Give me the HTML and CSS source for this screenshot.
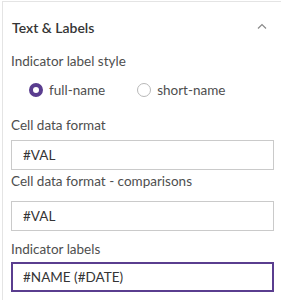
FILE: index.html
```html
<!DOCTYPE html>
<html>
<head>
<meta charset="utf-8">
<link rel="stylesheet" href="styles.css">
</head>
<body>
<div class="panel">
  <div class="header">
    <span class="title">Text &amp; Labels</span>
    <svg class="chev" width="10" height="6" viewBox="0 0 10 6"><path d="M1 5.5 L5 1.5 L9 5.5" fill="none" stroke="#8a8a8a" stroke-width="1.2"/></svg>
  </div>
  <div class="body">
    <div class="label l1">Indicator label style</div>
    <div class="radios">
      <label class="radio"><span class="dot checked"></span>full-name</label>
      <label class="radio"><span class="dot"></span>short-name</label>
    </div>
    <div class="label l2">Cell data format</div>
    <div class="input i1">#VAL</div>
    <div class="label l3">Cell data format - comparisons</div>
    <div class="input i2">#VAL</div>
    <div class="label l4">Indicator labels</div>
    <div class="input i3 focus">#NAME (#DATE)</div>
  </div>
</div>
</body>
</html>
```
FILE: styles.css
```css
html, body { margin: 0; padding: 0; background: #fff; }
body { font-family: "Lato", "Noto Sans", sans-serif; color: #323232; }
.panel {
  margin: 1px 0 0 2px;
  border-top: 1px solid #e4e4e4;
  border-left: 1px solid #e4e4e4;
  height: 299px;
  box-sizing: border-box;
}
.header {
  display: flex;
  align-items: center;
  justify-content: space-between;
  height: 50px;
  padding: 0 14px 0 9px;
}
.title { font-size: 14px; font-weight: 600; color: #353535; }
.chev { margin-top: -2px; }
.body { padding: 0 7px 0 8px; display: flex; flex-direction: column; }
.label { font-size: 13.5px; color: #4e4e4e; line-height: 18px; }
.l2 { margin-top: 19px; }
.l3 { margin-top: 2px; }
.l4 { margin-top: 9px; }
.radios { display: flex; margin-top: 13px; padding-left: 18px; height: 14px; }
.radio { display: flex; align-items: center; font-size: 13.5px; color: #4e4e4e; margin-right: 32px; }
.dot {
  width: 14px; height: 14px; box-sizing: border-box;
  border: 1px solid #b8b8b8; border-radius: 50%; margin-right: 6px; background: #fff;
}
.dot.checked { border: 4px solid #5a3d8f; }
.input {
  height: 30px; box-sizing: border-box;
  border: 1px solid #cacaca;
  padding: 0 11px;
  display: flex; align-items: center;
  font-size: 13.5px; color: #353535;
}
.i1 { margin-top: 6px; }
.i2 { margin-top: 11px; }
.i3 { margin-top: 4px; }
.input.focus { border: 2px solid #5a3d8f; padding: 0 10px; }
```
